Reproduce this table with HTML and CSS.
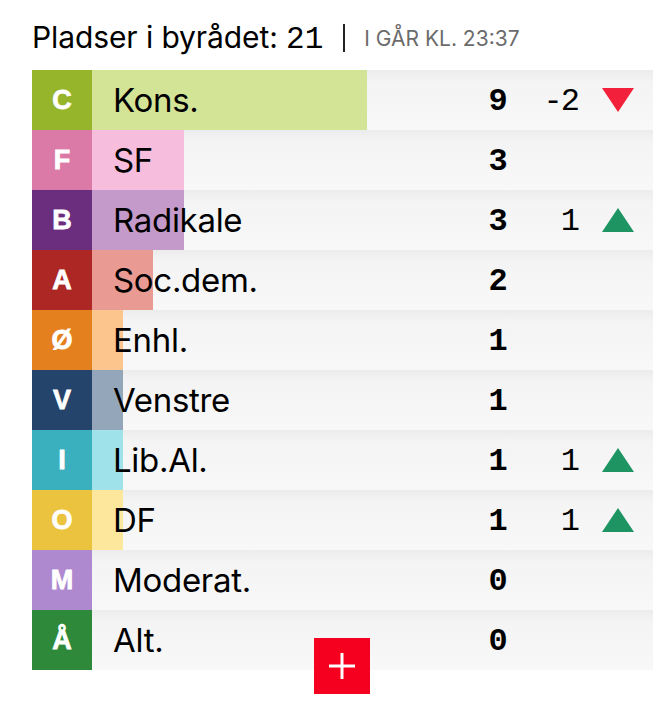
FILE: index.html
```html
<!DOCTYPE html>
<html lang="da">
<head>
<meta charset="utf-8">
<link rel="stylesheet" href="styles.css">
</head>
<body>
<div class="widget">
  <div class="head">
    <span class="title">Pladser i byrådet: <span class="total">21</span></span>
    <span class="sep"></span>
    <span class="time">I GÅR KL. 23:37</span>
  </div>
  <div class="board">
    <div class="row">
      <div class="letter c-c">C</div>
      <div class="namecell"><div class="bar b-c" style="width:275px"></div><div class="name">Kons.</div></div>
      <div class="seats">9</div>
      <div class="change">-2</div>
      <div class="trend"><span class="tri down"></span></div>
    </div>
    <div class="row">
      <div class="letter c-f">F</div>
      <div class="namecell"><div class="bar b-f" style="width:92px"></div><div class="name">SF</div></div>
      <div class="seats">3</div>
      <div class="change"></div>
      <div class="trend"></div>
    </div>
    <div class="row">
      <div class="letter c-b">B</div>
      <div class="namecell"><div class="bar b-b" style="width:92px"></div><div class="name">Radikale</div></div>
      <div class="seats">3</div>
      <div class="change">1</div>
      <div class="trend"><span class="tri up"></span></div>
    </div>
    <div class="row">
      <div class="letter c-a">A</div>
      <div class="namecell"><div class="bar b-a" style="width:61px"></div><div class="name">Soc.dem.</div></div>
      <div class="seats">2</div>
      <div class="change"></div>
      <div class="trend"></div>
    </div>
    <div class="row">
      <div class="letter c-oe">Ø</div>
      <div class="namecell"><div class="bar b-oe" style="width:31px"></div><div class="name">Enhl.</div></div>
      <div class="seats">1</div>
      <div class="change"></div>
      <div class="trend"></div>
    </div>
    <div class="row">
      <div class="letter c-v">V</div>
      <div class="namecell"><div class="bar b-v" style="width:31px"></div><div class="name">Venstre</div></div>
      <div class="seats">1</div>
      <div class="change"></div>
      <div class="trend"></div>
    </div>
    <div class="row">
      <div class="letter c-i">I</div>
      <div class="namecell"><div class="bar b-i" style="width:31px"></div><div class="name">Lib.Al.</div></div>
      <div class="seats">1</div>
      <div class="change">1</div>
      <div class="trend"><span class="tri up"></span></div>
    </div>
    <div class="row">
      <div class="letter c-o">O</div>
      <div class="namecell"><div class="bar b-o" style="width:31px"></div><div class="name">DF</div></div>
      <div class="seats">1</div>
      <div class="change">1</div>
      <div class="trend"><span class="tri up"></span></div>
    </div>
    <div class="row">
      <div class="letter c-m">M</div>
      <div class="namecell"><div class="bar" style="width:0px"></div><div class="name">Moderat.</div></div>
      <div class="seats">0</div>
      <div class="change"></div>
      <div class="trend"></div>
    </div>
    <div class="row">
      <div class="letter c-aa">Å</div>
      <div class="namecell"><div class="bar" style="width:0px"></div><div class="name">Alt.</div></div>
      <div class="seats">0</div>
      <div class="change"></div>
      <div class="trend"></div>
    </div>
    <button class="more" aria-label="Vis flere">
      <svg width="28" height="28" viewBox="0 0 28 28"><path d="M14 1V27M1 14H27" stroke="#fff" stroke-width="3" fill="none"/></svg>
    </button>
  </div>
</div>
</body>
</html>
```
FILE: styles.css
```css
* { box-sizing: border-box; }
html, body { margin: 0; padding: 0; background: #fff; }
body { font-family: Inter, "Noto Sans", sans-serif; color: #000; }

.widget { padding: 18px 12px 40px 32px; }

.head {
  display: flex;
  align-items: center;
  height: 40px;
  margin-bottom: 12px;
}
.title { font-size: 30px; letter-spacing: -0.1px; }
.total { font-family: "Liberation Mono", monospace; font-size: 31px; letter-spacing: 0; }
.sep { width: 2px; height: 28px; background: #222; margin: 0 19px 0 20px; }
.time { font-size: 21px; color: #6b6b6b; letter-spacing: 0; }

.board { position: relative; width: 621px; }

.row {
  display: grid;
  grid-template-columns: 60px 376px 60px 50px 75px;
  height: 60px;
  background: linear-gradient(to bottom, #ececec 0%, #f4f4f4 20%, #f8f8f8 100%);
}

.letter {
  display: flex;
  align-items: center;
  justify-content: center;
  color: #fff;
  font-family: "Liberation Sans", Arial, sans-serif;
  font-weight: 700;
  font-size: 27px;
  -webkit-text-stroke: 0.8px #fff;
}

.namecell { display: grid; }
.bar, .name { grid-area: 1 / 1; }
.bar { height: 60px; }
.name {
  align-self: center;
  padding-left: 21px;
  font-size: 33px;
  letter-spacing: -0.3px;
}

.seats {
  display: flex; align-items: center; justify-content: center;
  font-family: "Liberation Mono", monospace;
  font-weight: 700;
  font-size: 32px;
  padding-top: 3px;
}
.change {
  display: flex; align-items: center; justify-content: flex-end;
  font-family: "Liberation Mono", monospace;
  font-size: 32px;
  letter-spacing: -2px;
  padding-top: 3px;
}
.trend { display: flex; align-items: center; padding-left: 24px; }
.tri { width: 0; height: 0; border-left: 16px solid transparent; border-right: 16px solid transparent; }
.tri.down { border-top: 24px solid #f2203a; }
.tri.up { border-bottom: 24px solid #1e9462; }

.more {
  position: absolute;
  left: 282px;
  top: 568px;
  width: 56px;
  height: 56px;
  border: 0;
  padding: 0;
  background: #f5001f;
  display: flex;
  align-items: center;
  justify-content: center;
}

.c-c { background: #97b52b; } .b-c { background: #d3e496; }
.c-f { background: #dc7aa7; } .b-f { background: #f6bedc; }
.c-b { background: #6b2d7d; } .b-b { background: #c39ac9; }
.c-a { background: #ad2724; } .b-a { background: #e89a93; }
.c-oe { background: #e5801f; } .b-oe { background: #fcc58e; }
.c-v { background: #25446b; } .b-v { background: #94a6b9; }
.c-i { background: #3ab0bf; } .b-i { background: #a0e2ea; }
.c-o { background: #ebc33f; } .b-o { background: #fde79d; }
.c-m { background: #ae89cf; }
.c-aa { background: #2e8a3a; }
```
